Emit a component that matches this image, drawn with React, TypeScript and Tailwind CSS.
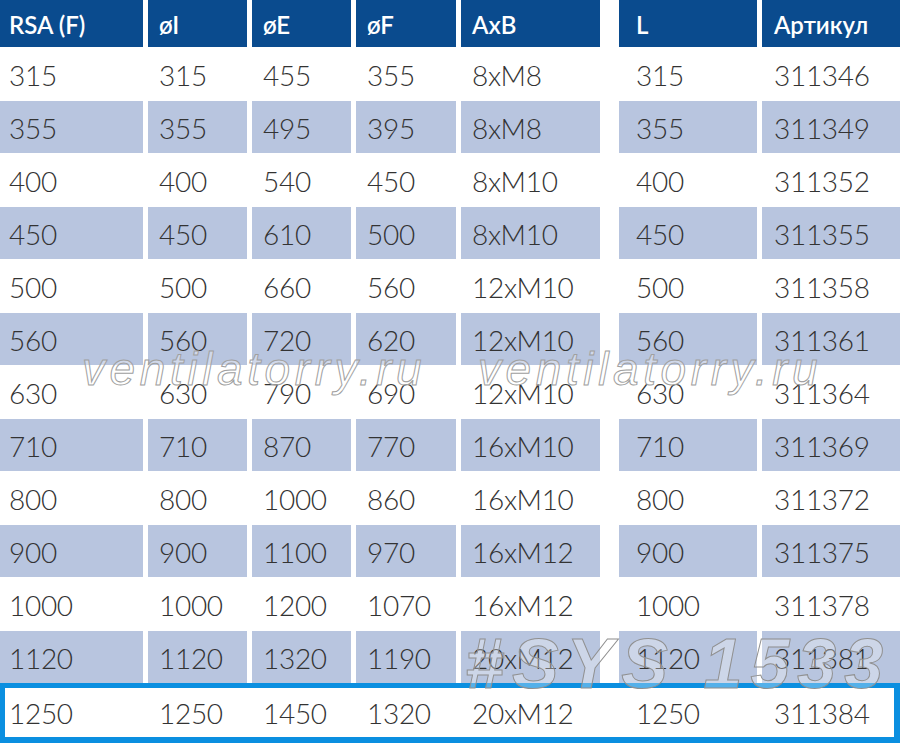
import React from "react";

const headers = ["RSA (F)", "øI", "øE", "øF", "AxB", "L", "Артикул"];

const rows: string[][] = [
  ["315", "315", "455", "355", "8xM8", "315", "311346"],
  ["355", "355", "495", "395", "8xM8", "355", "311349"],
  ["400", "400", "540", "450", "8xM10", "400", "311352"],
  ["450", "450", "610", "500", "8xM10", "450", "311355"],
  ["500", "500", "660", "560", "12xM10", "500", "311358"],
  ["560", "560", "720", "620", "12xM10", "560", "311361"],
  ["630", "630", "790", "690", "12xM10", "630", "311364"],
  ["710", "710", "870", "770", "16xM10", "710", "311369"],
  ["800", "800", "1000", "860", "16xM10", "800", "311372"],
  ["900", "900", "1100", "970", "16xM12", "900", "311375"],
  ["1000", "1000", "1200", "1070", "16xM12", "1000", "311378"],
  ["1120", "1120", "1320", "1190", "20xM12", "1120", "311381"],
];

const lastRow = ["1250", "1250", "1450", "1320", "20xM12", "1250", "311384"];

// padding per column, the 6th slot is the wide white gap
const pads = ["pl-[9px]", "pl-[11px]", "pl-[11px]", "pl-[11px]", "pl-[11px]", "pl-[17px]", "pl-[12px]"];

const gridCols = "grid grid-cols-[143px_99px_99px_100px_139px_9px_138px_138px] gap-x-[5px]";

function Cells({ values, cellClass, firstPad }: { values: string[]; cellClass: string; firstPad?: string }) {
  const out: React.ReactNode[] = [];
  values.forEach((v, i) => {
    if (i === 5) out.push(<div key="gap" />);
    const pad = i === 0 && firstPad ? firstPad : pads[i];
    out.push(
      <div key={i} className={`flex items-center leading-none ${pad} ${cellClass}`}>
        {v}
      </div>
    );
  });
  return <>{out}</>;
}

export default function App() {
  return (
    <div className="relative w-[900px] h-[743px] overflow-hidden bg-white" style={{ fontFamily: "Lato, 'Open Sans', sans-serif" }}>
      <div className="flex flex-col gap-y-px">
        <div className={`${gridCols} h-[47px]`}>
          <Cells values={headers} cellClass="bg-[#0a4b8e] text-white text-[24px] font-semibold pt-[2px]" />
        </div>
        {rows.map((r, idx) => (
          <div key={idx} className={`${gridCols} h-[52px]`}>
            <Cells
              values={r}
              cellClass={`text-[28px] font-light tracking-[-0.3px] text-[#333] pt-px ${idx % 2 === 1 ? "bg-[#b8c5df]" : "bg-white"}`}
            />
          </div>
        ))}
        <div className="-mt-px h-[60px] border-[5px] border-r-[6px] border-b-[6px] border-[#0b8fe0] bg-white">
          <div className="grid grid-cols-[138px_99px_99px_100px_139px_9px_138px_132px] gap-x-[5px] h-full">
            <Cells values={lastRow} firstPad="pl-[4px]" cellClass="text-[28px] font-light tracking-[-0.3px] text-[#333] pt-px" />
          </div>
        </div>
      </div>

      {/* watermarks */}
      <div
        className="absolute left-[82px] top-[346px] text-[46px] italic leading-none tracking-[4.6px] text-white/35 [-webkit-text-stroke:1px_#a0a0a0] whitespace-nowrap"
        style={{ fontFamily: "'Liberation Sans', sans-serif" }}
      >
        ventilatorry.ru
      </div>
      <div
        className="absolute left-[478px] top-[346px] text-[46px] italic leading-none tracking-[4.6px] text-white/35 [-webkit-text-stroke:1px_#a0a0a0] whitespace-nowrap"
        style={{ fontFamily: "'Liberation Sans', sans-serif" }}
      >
        ventilatorry.ru
      </div>
      <div
        className="absolute left-[465px] top-[629px] text-[70px] font-bold italic leading-none tracking-[8px] text-white/30 [-webkit-text-stroke:1px_#909090] whitespace-nowrap"
        style={{ fontFamily: "'Liberation Sans', sans-serif" }}
      >
        #SYS 1533
      </div>
    </div>
  );
}
